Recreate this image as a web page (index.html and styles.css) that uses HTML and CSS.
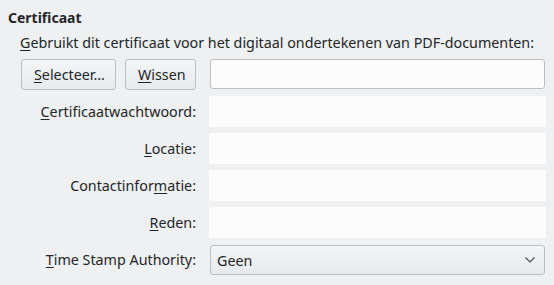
FILE: index.html
```html
<!DOCTYPE html>
<html>
<head>
  <meta charset="UTF-8">
  <title>Certificaat</title>
  <link rel="stylesheet" href="styles.css">
</head>
<body>
  <div class="section">
    <h2 class="section-title">Certificaat</h2>
    <div class="section-body">
      <p class="intro"><u>G</u>ebruikt dit certificaat voor het digitaal ondertekenen van PDF-documenten:</p>
      <div class="form-grid">
        <div class="button-row">
          <button class="push-btn"><u>S</u>electeer...</button>
          <button class="push-btn"><u>W</u>issen</button>
        </div>
        <div class="line-edit framed"></div>

        <label class="field-label"><u>C</u>ertificaatwachtwoord:</label>
        <div class="line-edit"></div>

        <label class="field-label"><u>L</u>ocatie:</label>
        <div class="line-edit"></div>

        <label class="field-label">Contactinfor<u>m</u>atie:</label>
        <div class="line-edit"></div>

        <label class="field-label"><u>R</u>eden:</label>
        <div class="line-edit"></div>

        <label class="field-label"><u>T</u>ime Stamp Authority:</label>
        <div class="combo">
          <span>Geen</span>
          <svg class="combo-arrow" width="12" height="8" viewBox="0 0 12 8">
            <path d="M1.5 1.5 L6 6 L10.5 1.5" fill="none" stroke="#4d5054" stroke-width="1.2"/>
          </svg>
        </div>
      </div>
    </div>
  </div>
</body>
</html>
```

FILE: styles.css
```css
:root {
  --window-bg: #eff0f1;
  --text-color: #232629;
  --field-bg: #fcfcfc;
  --frame-color: #bcbebf;
  --button-top: #f4f5f6;
  --button-bottom: #e8e9ea;
}

* {
  margin: 0;
  padding: 0;
  box-sizing: border-box;
}

body {
  font-family: 'Noto Sans', 'DejaVu Sans', sans-serif;
  font-size: 14.3px;
  color: var(--text-color);
  background-color: var(--window-bg);
  width: 554px;
  height: 285px;
  overflow: hidden;
}

u {
  text-decoration-thickness: 1px;
  text-underline-offset: 2px;
}

.section {
  padding: 6px 8px 0 8px;
}

.section-title {
  font-size: 14px;
  font-weight: 700;
  line-height: 22px;
  padding-top: 1px;
}

.section-body {
  padding-left: 12px;
}

.intro {
  line-height: 22px;
  margin-top: 3px;
}

.form-grid {
  display: grid;
  grid-template-columns: 189px 337px;
  grid-auto-rows: 31px;
  row-gap: 6px;
  margin-top: 5px;
}

.button-row {
  display: flex;
  gap: 9px;
  padding-left: 1px;
}

.push-btn {
  font-family: inherit;
  font-size: 14.3px;
  color: var(--text-color);
  height: 31px;
  padding: 0 12px;
  border: 1px solid var(--frame-color);
  border-radius: 3px;
  background: linear-gradient(var(--button-top), var(--button-bottom));
}

.push-btn:first-child {
  width: 95px;
}

.push-btn:last-child {
  width: 71px;
}

.field-label {
  display: flex;
  align-items: center;
  justify-content: flex-end;
  padding-right: 13px;
}

.line-edit {
  background-color: var(--field-bg);
}

.line-edit.framed {
  margin-left: 1px;
  margin-right: 1px;
  height: 30px;
  border: 1px solid var(--frame-color);
  border-radius: 3px;
}

.combo {
  display: flex;
  align-items: center;
  justify-content: space-between;
  margin: 1px 1px 0 1px;
  height: 30px;
  padding: 0 8px 0 6px;
  border: 1px solid var(--frame-color);
  border-radius: 3px;
  background: linear-gradient(var(--button-top), var(--button-bottom));
}

.combo-arrow {
  display: block;
}
```
